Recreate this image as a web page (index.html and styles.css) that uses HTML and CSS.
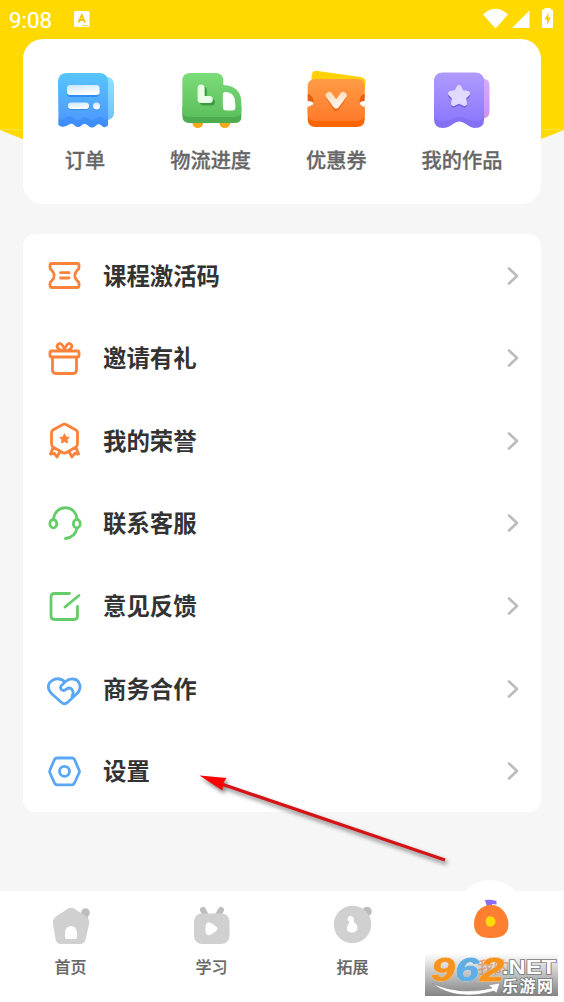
FILE: index.html
```html
<!DOCTYPE html>
<html lang="zh-CN">
<head>
<meta charset="utf-8">
<title>我的</title>
<link rel="stylesheet" href="styles.css">
</head>
<body>
<div class="screen">
  <svg class="backdrop" viewBox="0 0 564 180"><path fill="#ffd900" d="M0 0H564V130Q282 248 0 130Z"/><path stroke="#ffe23a" d="M0 129.500H564"/></svg>
  <header class="status">
    <span class="time">9:08</span>
    <svg class="kbd" viewBox="0 0 16 17"><rect width="15.500" height="16" rx="1.500" fill="#fff"/><path d="M4.500 11.500 7.800 4 11 11.500M5.800 9H9.800" fill="none" stroke="#f0c800" stroke-width="1.800"/><path d="M8 14.500H14" stroke="#f5d840"/></svg>
    <svg class="signals" viewBox="482 6 74 24" fill="#fff"><path d="M483 14.500Q495.500 3 508 14.500L495.500 28.500Z"/><path d="M512 28 529.500 10.500V28Z"/><path d="M542 10.500Q542 9.500 543 9.500H544.500V8H550.500V9.500H552Q553 9.500 553 10.500V27Q553 28 552 28H543Q542 28 542 27Z"/><path fill="#f1ca00" d="M548.800 12.500 544.500 19.500H547.200V25L550.800 17.500H548.200Z"/></svg>
  </header>

  <main class="content">
    <section class="shortcuts">
      <a class="shortcut">
        <svg viewBox="42 68 84 64">
          <defs>
            <linearGradient id="blue" x1="0" y1="0" x2="0" y2="1"><stop stop-color="#57c5fb"/><stop offset="1" stop-color="#4c94ff"/></linearGradient>
            <linearGradient id="sky" x1="0" y1="0" x2="0" y2="1"><stop stop-color="#8be2ff"/><stop offset="1" stop-color="#70c1ff"/></linearGradient>
            <linearGradient id="pale" x1="0" y1="0" x2="0.300" y2="1"><stop stop-color="#c9e6ff"/><stop offset="1" stop-color="#fff"/></linearGradient>
          </defs>
          <rect x="90" y="77" width="24" height="43" rx="7" fill="url(#sky)"/>
          <path fill="url(#blue)" d="M58 82Q58 73 67 73H99Q108 73 108 82V125Q105 129 101.500 125.500Q98.500 122.500 96 125.500Q92 129.500 88 125.500Q85 122.500 82 125Q78 129 74 125Q71.500 122.500 69 124.500Q63 128.500 58.500 125Z"/>
          <path fill="#368bf7" opacity=".65" d="M58.500 118Q62 121 65 118Q70 114.500 74 118.500Q78 122 82 118.500Q85 116 88 118.500Q92 122 96 118.500Q101 115 105 120L108 119V125Q105 129 101.500 125.500Q98.500 122.500 96 125.500Q92 129.500 88 125.500Q85 122.500 82 125Q78 129 74 125Q71.500 122.500 69 124.500Q63 128.500 58.500 125Z"/>
          <g fill="#318df1"><rect x="67" y="87" width="32" height="10" rx="3.500"/><rect x="68" y="104" width="21" height="6" rx="3"/><circle cx="96.500" cy="107" r="3.500"/></g>
          <g fill="url(#pale)"><rect x="67" y="85" width="32.500" height="10" rx="3"/><rect x="68" y="102.500" width="21" height="6.500" rx="3"/><circle cx="96.500" cy="106" r="3.500"/></g>
        </svg>
        <span>订单</span>
      </a>
      <a class="shortcut">
        <svg viewBox="167.670 68 84 64">
          <defs><linearGradient id="green" x1="0" y1="0" x2="0" y2="1"><stop stop-color="#7bdc79"/><stop offset="1" stop-color="#5cc05d"/></linearGradient></defs>
          <circle cx="197.500" cy="122.500" r="5.500" fill="#f7a71c"/><circle cx="224.500" cy="122.500" r="5.500" fill="#f7a71c"/>
          <path fill="#4dac50" d="M182 106H241V117Q241 123 234 123H189Q182 123 182 116Z"/>
          <path fill="url(#green)" d="M182 81Q182 73 190 73H215Q223 73 223 81V85Q241 86 241 103V111Q241 117 234 117H189Q182 117 182 110Z"/>
          <path fill="none" stroke="#3e9b44" stroke-width="7" stroke-linecap="round" stroke-linejoin="round" d="M203 90V102H211"/>
          <path fill="none" stroke="#eaffe7" stroke-width="7" stroke-linecap="round" stroke-linejoin="round" d="M200.800 88V99.500H209"/>
          <path fill="#fff" d="M222.500 95Q222.500 91.500 226 92Q235 92.500 235 104V108Q235 110.500 232 110.500H226Q222.500 110.500 222.500 107Z"/>
        </svg>
        <span>物流进度</span>
      </a>
      <a class="shortcut">
        <svg viewBox="293.330 68 84 64">
          <defs><linearGradient id="orange" x1="0" y1="0" x2="0" y2="1"><stop stop-color="#ff9b45"/><stop offset="1" stop-color="#ff7b2b"/></linearGradient><linearGradient id="cream" x1="0" y1="0" x2=".3" y2="1"><stop stop-color="#ffe0bf"/><stop offset="1" stop-color="#fff2e7"/></linearGradient></defs>
          <path fill="#ffd100" d="M312 75Q313 70 318 71L361 77Q366 78 366 82L363 105 311 98Z"/>
          <path fill="#f96500" d="M308 105H365V119Q365 127 357 127H316Q308 127 308 119Z"/>
          <path fill="url(#orange)" d="M308 87Q308 79 316 79H357Q365 79 365 87V97Q360 99 360 103Q361 106 365 107V113Q365 121 357 121H316Q308 121 308 113V107Q313 106 314 103Q313 99 308 97Z"/>
          <path fill="#e95d0b" d="M308 94Q313 95 314 101V104L308 101ZM365 94Q360 95 360 101V104L365 101Z"/>
          <path fill="#fff" d="M308 101Q312 101 314 103Q312 106 308 107ZM365 101Q361 101 360 103Q361 106 365 107Z"/>
          <path fill="none" stroke="#e96211" stroke-width="6.500" stroke-linecap="round" stroke-linejoin="round" d="M329.500 97 336.500 107.500 343.500 97"/>
          <path fill="none" stroke="url(#cream)" stroke-width="7" stroke-linecap="round" stroke-linejoin="round" d="M329.500 95.500 336.500 105 343.500 95.500"/>
        </svg>
        <span>优惠券</span>
      </a>
      <a class="shortcut">
        <svg viewBox="419 68 84 64">
          <defs><linearGradient id="purple" x1="0" y1="0" x2="0" y2="1"><stop stop-color="#b19bff"/><stop offset="1" stop-color="#8c79fc"/></linearGradient><linearGradient id="pink" x1="0" y1="0" x2="0" y2="1"><stop stop-color="#d6acfb"/><stop offset="1" stop-color="#d18fee"/></linearGradient></defs>
          <path fill="url(#pink)" d="M478 79H484Q489.500 79 489.500 85V112Q489.500 119 480 119Z"/>
          <path fill="#8470f3" d="M434 82Q434 73 443 73H475Q484 73 484 82V120Q484 128 475 128Q471 128 466 124Q459 119 453 124Q448 128 443 128Q434 128 434 119Z"/>
          <path fill="url(#purple)" d="M434 82Q434 72.500 443 72.500H475Q484 72.500 484 82V115Q484 121 475 121Q471 121 466 118.500Q459 115 453 118.500Q448 121 443 121Q434 121 434 115Z"/>
          <path fill="#735ee5" stroke="#735ee5" stroke-width="5" stroke-linejoin="round" d="M459 89.500 461.500 94.500 467.500 95.500 463.500 99.500 464.500 105 459 102.500 453.500 105 454.500 99.500 450.500 95.500 456.500 94.500Z"/>
          <path fill="#e2d9ff" stroke="#e2d9ff" stroke-width="5" stroke-linejoin="round" d="M459 87.500 461.500 92.500 467.500 93.500 463.500 97.500 464.500 103.500 459 101 453.500 103.500 454.500 97.500 450.500 93.500 456.500 92.500Z"/>
        </svg>
        <span>我的作品</span>
      </a>
    </section>

    <section class="menu">
      <a class="row orange"><svg class="icon" viewBox="46 257 37 37"><path d="M52 263.500H77Q79 263.500 79 265.500V267.500Q79 269 77.500 270Q72 275.500 77.500 281Q79 282 79 283.500V285.500Q79 287.500 77 287.500H52Q50 287.500 50 285.500V283.500Q50 282 51.500 281Q57 275.500 51.500 270Q50 269 50 267.500V265.500Q50 263.500 52 263.500ZM60.500 272.700H69M60.500 278H69"/></svg><span>课程激活码</span><svg class="arrow" viewBox="0 0 12 20"><path d="M2 2.500 10 10 2 17.500"/></svg></a>
      <a class="row orange"><svg class="icon" viewBox="46 339.500 37 37"><path d="M51.500 350.500H77.500Q79 350.500 79 352V355Q79 356.500 77.500 356.500H51.500Q50 356.500 50 355V352Q50 350.500 51.500 350.500ZM52.500 356.500V369.500Q52.500 373 56 373H73Q76.500 373 76.500 369.500V356.500M64.500 350.500C60 350.500 56 347 57.500 344.500C59.500 341 63.500 344 64.500 350.500C65.500 344 69.500 341 71.500 344.500C73 347 69 350.500 64.500 350.500Z"/></svg><span>邀请有礼</span><svg class="arrow" viewBox="0 0 12 20"><path d="M2 2.500 10 10 2 17.500"/></svg></a>
      <a class="row orange"><svg class="icon" viewBox="46 422.500 37 37"><path d="M62.500 425.200Q64.500 424 66.500 425.200L76 430.500Q77.500 431.500 77.500 433.500V444Q77.500 446.500 76 447.500L66.500 453Q64.500 454 62.500 453L53 447.500Q51.500 446.500 51.500 444V433.500Q51.500 431.500 53 430.500ZM53 448 50.500 454.500 54.500 454 57 457.500 60 452M76 448 78.500 454.500 74.500 454 72 457.500 69 452"/><path class="solid" d="M64.500 434.500 66 437.500 69.200 438 66.900 440.300 67.500 443.500 64.500 442 61.500 443.500 62.100 440.300 59.800 438 63 437.500Z"/></svg><span>我的荣誉</span><svg class="arrow" viewBox="0 0 12 20"><path d="M2 2.500 10 10 2 17.500"/></svg></a>
      <a class="row green"><svg class="icon" viewBox="46 505 37 37"><path d="M53.500 519C55.500 504 75.500 504 77 519M77 528Q75.500 537 65.500 538.500"/><ellipse cx="53.300" cy="523.700" rx="3.400" ry="4.200"/><ellipse cx="76.800" cy="523.700" rx="3.400" ry="4.200"/></svg><span>联系客服</span><svg class="arrow" viewBox="0 0 12 20"><path d="M2 2.500 10 10 2 17.500"/></svg></a>
      <a class="row green"><svg class="icon" viewBox="46 587.500 37 37"><path d="M69.500 593H54.500Q51 593 51 596.500V615.500Q51 619 54.500 619H74Q77.500 619 77.500 615.500V606M65 606.500 79 595"/></svg><span>意见反馈</span><svg class="arrow" viewBox="0 0 12 20"><path d="M2 2.500 10 10 2 17.500"/></svg></a>
      <a class="row blue"><svg class="icon" viewBox="46 670.500 37 37"><path d="M65 682.500C61 678.500 56 679 53 680.500C47 683.500 47 690 52 694.500L61 702.500Q64.500 706 68 702.500L76 695C83 689 80 680 73 679.500Q69 679 65 682.500L61 686.500Q59.800 688.500 61.500 690.200Q64 692 66.500 689.500Q69.500 687.500 71.500 689.500Q74.500 692.500 72 697"/></svg><span>商务合作</span><svg class="arrow" viewBox="0 0 12 20"><path d="M2 2.500 10 10 2 17.500"/></svg></a>
      <a class="row blue"><svg class="icon" viewBox="46 753 37 37"><path d="M57 758H72Q73.500 758 74.500 759.500L79 770Q80 771.500 79 773L74.500 783Q73.500 784.800 72 784.800H57Q55.500 784.800 54.500 783L50 773Q49.300 771.500 50 770L54.500 759.500Q55.500 758 57 758Z"/><circle cx="64.500" cy="771.300" r="5"/></svg><span>设置</span><svg class="arrow" viewBox="0 0 12 20"><path d="M2 2.500 10 10 2 17.500"/></svg></a>
    </section>
  </main>

  <nav class="tabs">
    <a class="tab"><svg viewBox="46 901 50 48"><circle cx="85.500" cy="912.500" r="4.300" fill="#bdbdbd"/><path fill="#bdbdbd" d="M82 914H89L87 921Z"/><path fill="#d0d0d0" d="M67 909.200Q71 906.500 75 909.200L86 916Q90 919 89 924L86 938Q85 944 80 944H61Q56.500 944 55.500 939L53 924Q52.500 919 56 916.500Z"/><path fill="#fff" d="M65 932Q66 926 71 926Q76 926 77 932V937Q77 939 75 939H67Q65 939 65 937Z"/></svg><span>首页</span></a>
    <a class="tab"><svg viewBox="187 901 50 48"><path stroke="#bdbdbd" stroke-width="6" stroke-linecap="round" d="M203 910 206 916M221 910 217.500 916"/><rect x="194" y="913.500" width="35.500" height="30.500" rx="8" fill="#d0d0d0"/><path fill="#fff" d="M206 924Q208 921.500 212 923.500L216 926.500Q219 928.500 216 931L212 934Q208 936.500 206 933.500Q204.500 929 206 924Z"/></svg><span>学习</span></a>
    <a class="tab"><svg viewBox="328 901 50 48"><circle cx="367" cy="911.500" r="4.800" fill="#bdbdbd"/><circle cx="352.500" cy="924.500" r="18.700" fill="#d0d0d0"/><path fill="#fff" d="M347.500 918.500Q349 914.500 353 917Q354.500 919 354 922Q359 926 357 930Q355 933 351.500 932.500Q346 932 347 927L349.500 921.500Q347.500 921 347.500 918.500Z"/></svg><span>拓展</span></a>
    <a class="tab active"><svg viewBox="469 897 50 48"><path fill="#8b6dfb" d="M485 899Q490 898 496.500 900V903.500L492 903 491 906H487Z"/><path fill="#ff7f31" d="M482 906.500Q491 901 500 906.500Q508.500 913 508.500 924Q508 933 501 935.500Q491 938.500 481 935.500Q474 932 474 923Q474 912 482 906.500Z"/><path fill="#ffda08" d="M487 916.500Q490 914 493.500 916.500Q497 920 494.500 923.500Q491 927.500 487 924.500Q484 920 487 916.500Z"/></svg><span>我的</span></a>
  </nav>

  <svg class="pointer" viewBox="190 765 270 110"><path d="M220 783.500 445 860" stroke="#d51317" stroke-width="3.200"/><path d="M199.500 775.500 226.500 778 223 783.500 222.500 790.500Z" fill="#f00"/></svg>
  <div class="watermark">
    <svg viewBox="0 0 133 43">
      <g class="digits"><text x="6" y="27.500" fill="#f7941d" stroke="#f7941d" textLength="24" lengthAdjust="spacingAndGlyphs">9</text><text x="30" y="27.500" fill="#5faee3" stroke="#5faee3" textLength="24" lengthAdjust="spacingAndGlyphs">6</text><text x="55" y="27.500" fill="#f7941d" stroke="#f7941d" textLength="24" lengthAdjust="spacingAndGlyphs">2</text></g>
      <text class="net" x="77" y="21" textLength="54" lengthAdjust="spacingAndGlyphs">.NET</text>
      <text class="site" x="77" y="38.500" textLength="51">乐游网</text>
      <path fill="#fff" stroke="#888" stroke-width=".6" d="M7 30.500Q37 43 67 35L63 32 75 30 71.500 40 69 38Q32 49 7 30.500Z"/>
    </svg>
  </div>
</div>
</body>
</html>
```

FILE: styles.css
```css
* { box-sizing: border-box; }
body { margin: 0; font-family: "Noto Sans CJK SC", sans-serif; }
.screen { position: relative; width: 564px; height: 1002px; display: flex; flex-direction: column; background: #f6f6f6; overflow: hidden; }
svg { display: block; }
.backdrop { position: absolute; left: 0; top: 0; width: 564px; height: 180px; }
.status { position: relative; height: 39px; padding: 0 8px 3px 9px; display: flex; align-items: center; color: #fff; }
.time { width: 65px; font: 400 22.4px/36px Roboto, sans-serif; padding-top: 4px; -webkit-text-stroke: 0.2px #fff; }
.kbd { width: 16px; height: 17px; margin-top: 3px; }
.signals { width: 74px; height: 24px; margin-left: auto; }
.content { position: relative; flex: 1; padding: 0 23px; display: flex; flex-direction: column; gap: 30px; }
.shortcuts { height: 165px; padding: 29px 38px 0 19px; border-radius: 20px; background: #fff; display: flex; justify-content: space-between; }
.shortcut { width: 84px; display: flex; flex-direction: column; align-items: center; gap: 13px; color: #666; font-size: 20.2px; font-weight: 500; line-height: 30px; white-space: nowrap; -webkit-text-stroke: 0.3px #666; }
.shortcut span { padding-left: 2px; }
.shortcut svg { width: 84px; height: 64px; }
.menu { height: 578px; border-radius: 12px; background: #fff; display: grid; grid-template-rows: repeat(7, 1fr); }
.row { display: flex; align-items: center; padding: 1px 22px 0 23px; color: #333; font-size: 23.4px; font-weight: 700; line-height: 34px; }
.icon { width: 37px; height: 37px; margin-right: 20px; fill: none; stroke: currentColor; stroke-width: 2.8; stroke-linecap: round; stroke-linejoin: round; }
.row span { padding-bottom: 2px; }
.orange .icon { color: #fa823a; }
.green .icon { color: #64cc68; }
.blue .icon { color: #5aa8f5; }
.icon .solid { fill: currentColor; stroke-width: 1; }
.arrow { width: 12px; height: 20px; margin-left: auto; fill: none; stroke: #bcbcbc; stroke-width: 2.6; stroke-linecap: round; stroke-linejoin: round; }
.tabs { position: relative; height: 111px; background: #fff; display: grid; grid-template-columns: repeat(4, 141px); }
.tab { position: relative; padding-top: 10px; display: flex; flex-direction: column; align-items: center; gap: 5px; color: #666; font-size: 16px; font-weight: 500; line-height: 24px; -webkit-text-stroke: 0.2px #666; }
.tab svg { position: relative; width: 50px; height: 48px; }
.active { padding-top: 7px; gap: 8px; color: #ff8c48; -webkit-text-stroke: 0; }
.active::before { content: ""; position: absolute; left: 34px; top: -11px; width: 67px; height: 67px; border-radius: 50%; background: #fff; }
.pointer { position: absolute; left: 190px; top: 765px; width: 270px; height: 110px; filter: drop-shadow(2px 3px 2px rgba(0, 0, 0, .5)); }
.watermark { position: absolute; left: 425px; top: 953px; width: 133px; height: 43px; background: linear-gradient(rgba(255, 255, 255, .3), rgba(125, 125, 125, .95)); }
.watermark svg { width: 133px; height: 43px; overflow: visible; }
.digits { filter: drop-shadow(0 0 .6px #fff); }
.digits text { font: italic 700 34px "Liberation Sans", sans-serif; stroke-width: .8px; }
.net { font: 700 20px "Liberation Sans", sans-serif; fill: #fff; stroke: #777; stroke-width: 1.6px; paint-order: stroke; }
.site { font: 700 16px "Noto Sans CJK SC", sans-serif; fill: #fff; stroke: #777; stroke-width: 1.6px; paint-order: stroke; }
```
